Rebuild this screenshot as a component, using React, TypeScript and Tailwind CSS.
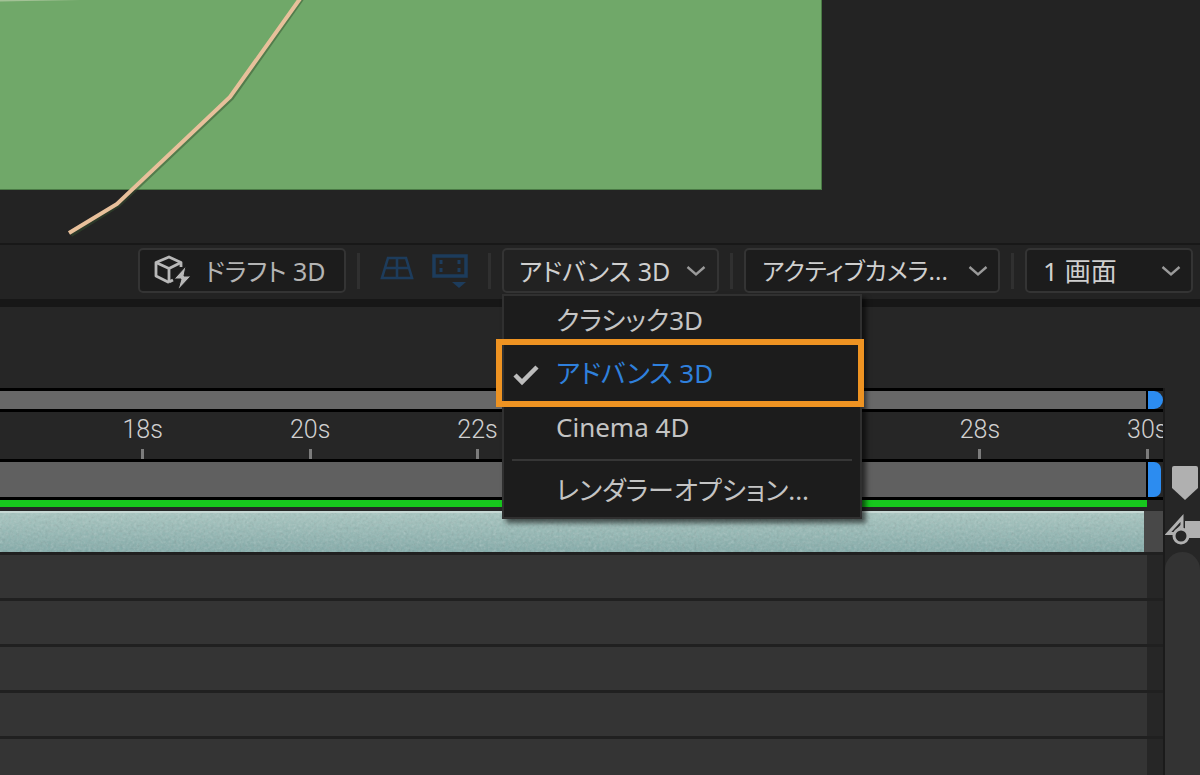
import React from "react";

const TEXT = "font-['Noto_Sans','Noto_Sans_CJK_JP',sans-serif] [font-feature-settings:'palt'] leading-[38px] font-normal";

const TICKS = ["18s", "20s", "22s", "", "", "28s", "30s"];

function Chevron({ className = "" }: { className?: string }) {
  return (
    <svg className={className} width="20" height="12" viewBox="0 0 20 12" fill="none" aria-hidden="true">
      <path d="M1.5 2 L10 9.5 L18.500 2" stroke="#9a9a9a" strokeWidth="2.4" />
    </svg>
  );
}

function Divider() {
  return (
    <div className="flex h-[45px] items-center">
      <span className="h-[36px] w-[3px] bg-[#303030]" />
    </div>
  );
}

function DraftIcon() {
  return (
    <svg width="38" height="38" viewBox="0 0 38 38" fill="none" aria-hidden="true">
      <g stroke="#b8b8b8" strokeWidth="2.8" strokeLinejoin="round">
        <path d="M28 15 V10.500 L16 5 L3 10.500 V24 L16 30.500" />
        <path d="M3 10.500 L16 16.500 L28 10.500 M16 16.500 V30.500 M16 30 L20 28" />
      </g>
      <path d="M33 14 L21 27 H28 L25 38 L38 24 H31 Z" fill="#b8b8b8" stroke="#1d1d1d" strokeWidth="1" />
    </svg>
  );
}

function GroundPlaneIcon() {
  return (
    <svg width="34" height="24" viewBox="0 0 34 24" fill="none" stroke="#1d3c5c" strokeWidth="2.6" aria-hidden="true">
      <path d="M8 2 H26 L32 22 H2 Z M5 12 H29 M17 2 V22" />
    </svg>
  );
}

function ExtendedViewerIcon() {
  return (
    <svg width="36" height="34" viewBox="0 0 36 34" fill="none" aria-hidden="true">
      <rect x="2" y="2" width="32" height="20" stroke="#1d3c5c" strokeWidth="3.500" />
      <path d="M9 6 V10 M9 14 V18 M27 6 V10 M27 14 V18" stroke="#1d3c5c" strokeWidth="3" />
      <path d="M20 28 H34 L27 34 Z" fill="#1d3c5c" />
    </svg>
  );
}

function Select({ id, label, value, className }: { id: string; label: string; value: string; className: string }) {
  return (
    <div className={`relative h-[45px] shrink-0 ${className}`}>
      <label htmlFor={id} className="sr-only">{label}</label>
      <select
        id={id}
        className={`${TEXT} h-full w-full appearance-none rounded-[5px] border-2 border-[#343434] bg-[#1c1c1c] pl-4 pr-10 text-[#cfcfcf]`}
      >
        <option>{value}</option>
      </select>
      <Chevron className="pointer-events-none absolute right-3 top-[17px]" />
    </div>
  );
}

function RendererMenu() {
  const item = `${TEXT} relative flex w-full items-center pl-[52px] text-left text-[26px]`;
  return (
    <div
      role="menu"
      className="absolute left-0 top-[46px] z-10 w-[360px] border-2 border-[#303030] bg-[#1c1c1c] text-[#c4c4c4] shadow-[4px_4px_5px_rgba(0,0,0,0.6)]"
    >
      <button role="menuitemradio" aria-checked="false" className={`${item} h-[48px]`}>クラシック3D</button>
      <button role="menuitemradio" aria-checked="true" className={`${item} mt-[2px] h-[54px] text-[#2f80dc]`}>
        <span className="absolute -inset-y-[7px] -left-[8px] -right-[4px] border-[6px] border-[#ee9322]" />
        <svg className="absolute left-[9px] top-[18px]" width="26" height="22" viewBox="0 0 26 22" fill="none" aria-hidden="true">
          <path d="M2 11 L9 18 L24 3" stroke="#bcbcbc" strokeWidth="4.500" />
        </svg>
        アドバンス 3D
      </button>
      <button role="menuitemradio" aria-checked="false" className={`${item} h-[54px]`}>Cinema 4D</button>
      <div role="separator" className="mx-2 mb-[2px] mt-[5px] h-[2px] bg-[#363636]" />
      <button role="menuitem" className={`${item} h-[54px]`}>レンダラーオプション...</button>
    </div>
  );
}

function Viewer() {
  return (
    <section className="relative h-[243px] shrink-0 overflow-hidden bg-[#232323]">
      <div className="h-[190px] w-[822px] border-b border-r border-[#4a7a45] bg-[#70a869]" />
      <svg className="absolute left-0 top-0" width="320" height="243" viewBox="0 0 320 243" fill="none" aria-hidden="true">
        <path d="M0 0 H80 L0 1.500 Z" fill="#a3c296" />
        <path d="M304 -4 L232 98 L119 205 L71 235" stroke="#35502f" strokeOpacity="0.5" strokeWidth="4" />
        <path d="M302 -4 L230 97 L117 204 L69 233" stroke="#e8c09b" strokeWidth="4" />
      </svg>
    </section>
  );
}

function Toolbar() {
  return (
    <div className="flex h-[56px] shrink-0 items-start gap-[11px] border-t-2 border-[#181818] bg-[#232323] pl-[138px] pr-[7px] pt-[3px]">
      <button className={`${TEXT} flex h-[45px] w-[208px] shrink-0 items-center gap-[14px] rounded-[5px] border-2 border-[#343434] bg-[#1c1c1c] pl-[13px] text-[25px] text-[#b4b4b4]`}>
        <DraftIcon />
        ドラフト 3D
      </button>
      <Divider />
      <div className="flex h-[45px] w-[106px] shrink-0 items-start gap-[18px] pl-[9px] pt-[6px]">
        <button aria-label="3D グランドプレーン" className="pt-[2px]"><GroundPlaneIcon /></button>
        <button aria-label="拡張ビューア"><ExtendedViewerIcon /></button>
      </div>
      <Divider />
      <div className="relative w-[217px] shrink-0">
        <button
          aria-haspopup="menu"
          aria-expanded="true"
          className={`${TEXT} flex h-[45px] w-full items-center justify-between rounded-[5px] border-2 border-[#343434] bg-[#222222] pl-[15px] pr-[11px] text-[25px] text-[#cfcfcf]`}
        >
          アドバンス 3D
          <Chevron />
        </button>
        <RendererMenu />
      </div>
      <Divider />
      <Select id="camera" label="3D ビュー" value="アクティブカメラ..." className="w-[256px] text-[24px]" />
      <Divider />
      <Select id="layout" label="ビューのレイアウト" value="1 画面" className="w-[168px] text-[26px]" />
    </div>
  );
}

function Timeline() {
  return (
    <section className="flex flex-1 bg-[#262626]">
      <div className="flex min-w-0 flex-1 flex-col overflow-hidden border-r-2 border-[#1b1b1b]">
        <div className="flex h-[24px] shrink-0 border-y-[3px] border-black">
          <div className="flex-1 border-r-2 border-black bg-[#686868]" />
          <div className="w-[15px] rounded-r-full bg-[#2c8cf0]" />
        </div>
        <ol className="-mr-[68px] ml-[59px] grid h-[47px] shrink-0 grid-cols-7">
          {TICKS.map((label, i) => (
            <li key={i} className="flex flex-col items-center justify-between font-['Roboto',sans-serif] text-[25px] font-light leading-[36px] text-[#d0d0d0]">
              <span className="h-[36px]">{label}</span>
              <span className="h-[10px] w-[3px] bg-[#7c7c7c]" />
            </li>
          ))}
        </ol>
        <div className="flex h-[41px] shrink-0 border-y-[3px] border-black">
          <div className="flex-1 border-r-2 border-black bg-[#606060]" />
          <div className="mr-[2px] w-[13px] rounded-r-[7px] bg-[#2c8cf0]" />
        </div>
        <div className="mr-[16px] h-[7px] shrink-0 bg-[#17c81d]" />
        <div className="mt-[4px] flex h-[41px] shrink-0 bg-[#484848]">
          <div className="relative flex-1 border-t-2 border-[#c6d8d4] bg-gradient-to-b from-[#a6c7c1] to-[#80aaa8]">
            <svg className="absolute inset-0 h-full w-full opacity-35" aria-hidden="true">
              <filter id="grain">
                <feTurbulence type="fractalNoise" baseFrequency="0.35" numOctaves="2" />
                <feColorMatrix type="saturate" values="0" />
              </filter>
              <rect width="100%" height="100%" filter="url(#grain)" />
            </svg>
          </div>
          <div className="w-[19px]" />
        </div>
        <div className="flex-1">
          {[0, 1, 2, 3, 4].map((row) => (
            <div key={row} className="h-[46px] border-t-[3px] border-[#202020] pr-[16px]">
              <div className="h-full bg-[#343434]" />
            </div>
          ))}
        </div>
      </div>
      <aside className="flex w-[35px] shrink-0 flex-col">
        <svg className="ml-[6px] mt-[76px]" width="28" height="38" viewBox="0 0 28 38" aria-hidden="true">
          <path d="M1 4 Q1 2 3 2 H25 Q27 2 27 4 V24 L14 36 L1 24 Z" fill="#b0b0b0" />
        </svg>
        <svg className="mt-[12px]" width="35" height="34" viewBox="0 0 35 34" fill="none" aria-hidden="true">
          <path d="M20 7 H35 V24 H20 Z" fill="#b0b0b0" />
          <path d="M9 19.500 H3 L17 4 V14" stroke="#b0b0b0" strokeWidth="3" />
          <path d="M9 19 L17 11" stroke="#b0b0b0" strokeWidth="2" />
          <circle cx="16" cy="22" r="7" fill="#262626" stroke="#b0b0b0" strokeWidth="3" />
        </svg>
        <div className="mt-[4px] flex-1 rounded-t-[18px] bg-[#333333]" />
      </aside>
    </section>
  );
}

export default function App() {
  return (
    <main className="flex min-h-screen flex-col overflow-hidden bg-[#262626]">
      <Viewer />
      <Toolbar />
      <div className="h-[89px] shrink-0 border-t-[8px] border-[#171717]" />
      <Timeline />
    </main>
  );
}
